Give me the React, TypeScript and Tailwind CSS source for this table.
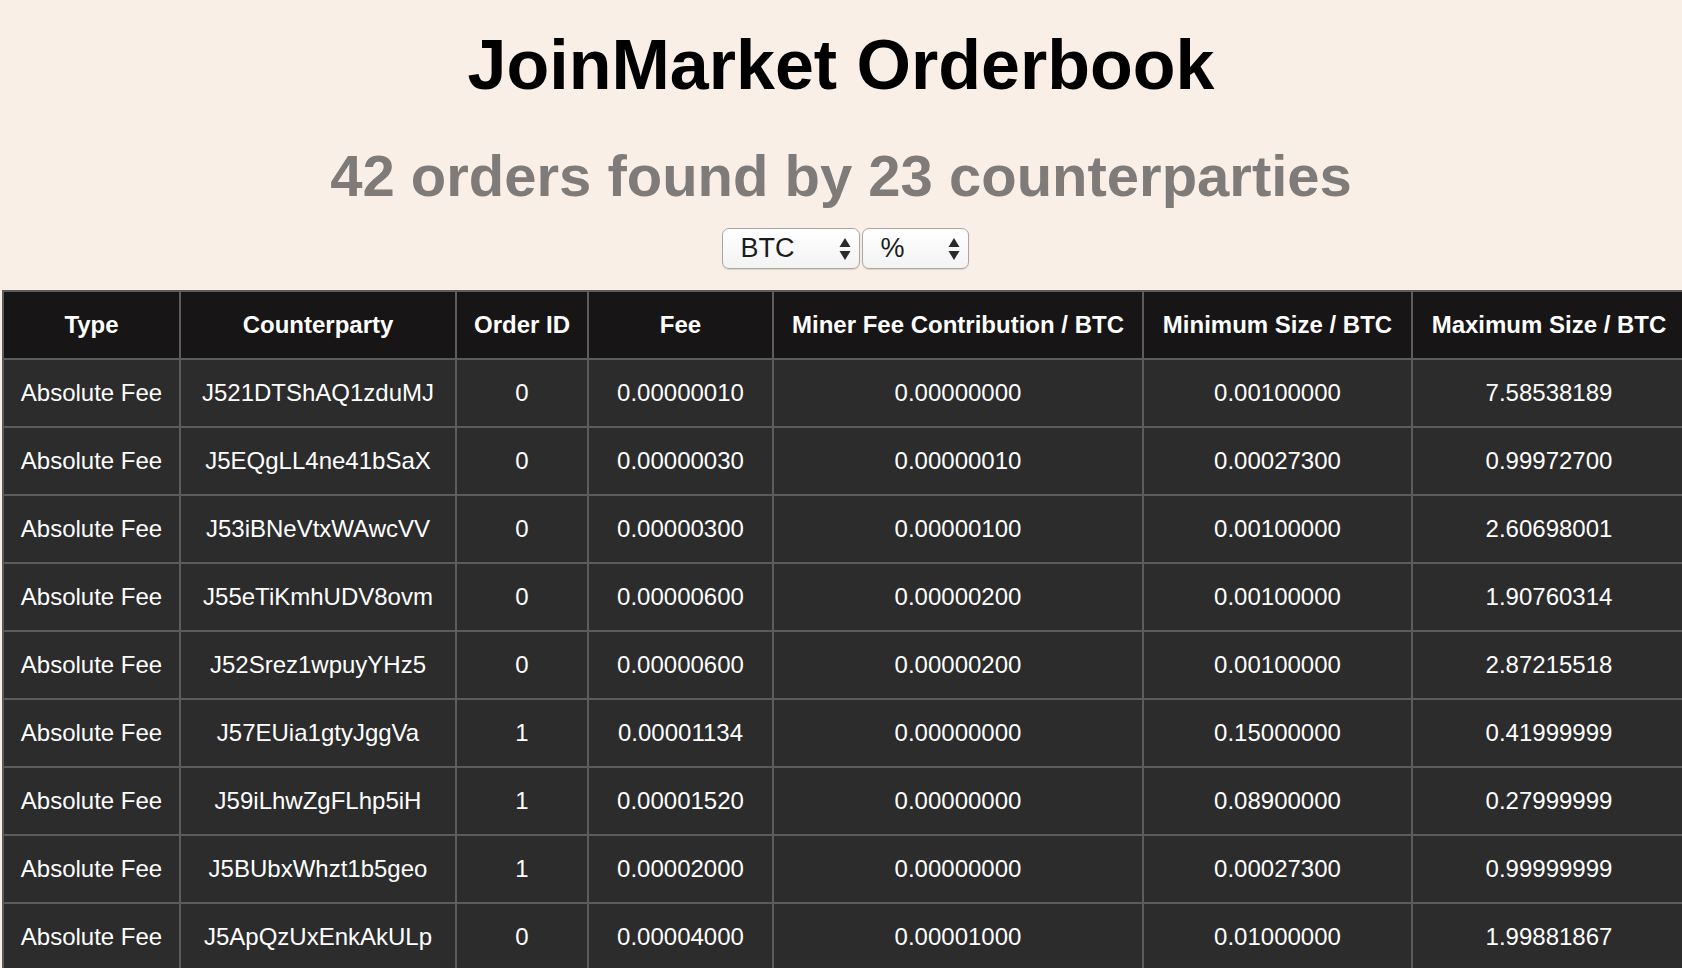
import React from "react";

interface Order {
	type: string;
	counterparty: string;
	oid: number;
	fee: string;
	minerFee: string;
	minSize: string;
	maxSize: string;
}

const orders: Order[] = [
	{ type: "Absolute Fee", counterparty: "J521DTShAQ1zduMJ", oid: 0, fee: "0.00000010", minerFee: "0.00000000", minSize: "0.00100000", maxSize: "7.58538189" },
	{ type: "Absolute Fee", counterparty: "J5EQgLL4ne41bSaX", oid: 0, fee: "0.00000030", minerFee: "0.00000010", minSize: "0.00027300", maxSize: "0.99972700" },
	{ type: "Absolute Fee", counterparty: "J53iBNeVtxWAwcVV", oid: 0, fee: "0.00000300", minerFee: "0.00000100", minSize: "0.00100000", maxSize: "2.60698001" },
	{ type: "Absolute Fee", counterparty: "J55eTiKmhUDV8ovm", oid: 0, fee: "0.00000600", minerFee: "0.00000200", minSize: "0.00100000", maxSize: "1.90760314" },
	{ type: "Absolute Fee", counterparty: "J52Srez1wpuyYHz5", oid: 0, fee: "0.00000600", minerFee: "0.00000200", minSize: "0.00100000", maxSize: "2.87215518" },
	{ type: "Absolute Fee", counterparty: "J57EUia1gtyJggVa", oid: 1, fee: "0.00001134", minerFee: "0.00000000", minSize: "0.15000000", maxSize: "0.41999999" },
	{ type: "Absolute Fee", counterparty: "J59iLhwZgFLhp5iH", oid: 1, fee: "0.00001520", minerFee: "0.00000000", minSize: "0.08900000", maxSize: "0.27999999" },
	{ type: "Absolute Fee", counterparty: "J5BUbxWhzt1b5geo", oid: 1, fee: "0.00002000", minerFee: "0.00000000", minSize: "0.00027300", maxSize: "0.99999999" },
	{ type: "Absolute Fee", counterparty: "J5ApQzUxEnkAkULp", oid: 0, fee: "0.00004000", minerFee: "0.00001000", minSize: "0.01000000", maxSize: "1.99881867" },
];

const columns = [
	{ label: "Type", width: "w-[177px]" },
	{ label: "Counterparty", width: "w-[276px]" },
	{ label: "Order ID", width: "w-[132px]" },
	{ label: "Fee", width: "w-[185px]" },
	{ label: "Miner Fee Contribution / BTC", width: "w-[370px]" },
	{ label: "Minimum Size / BTC", width: "w-[269px]" },
	{ label: "Maximum Size / BTC", width: "w-[274px]" },
];

const cell = "h-[68px] p-0 border-2 border-[#5c5c5c] text-[24px] text-center align-middle";

const SelectArrows = () => (
	<svg width="12" height="24" viewBox="0 0 12 24" className="shrink-0">
		<path d="M6 1 L11.5 10 L0.5 10 Z" fill="#2a2a2a" />
		<path d="M6 23 L11.5 14 L0.5 14 Z" fill="#2a2a2a" />
	</svg>
);

const FakeSelect = ({ value, width }: { value: string; width: string }) => (
	<div
		className={`${width} h-[41px] flex items-center justify-between pl-[18px] pr-[8px] rounded-[7px] border border-[#a9a7a4] bg-gradient-to-b from-[#ffffff] to-[#f3f3f3] shadow-[0_1px_1px_rgba(0,0,0,0.12)]`}
	>
		<span className="text-[27px] leading-none text-[#1c1c1c]">{value}</span>
		<SelectArrows />
	</div>
);

export default function App() {
	return (
		<div className="min-h-screen w-full overflow-hidden bg-[#f9efe6] font-['Liberation_Sans',Arial,sans-serif]">
			<div className="flex flex-col items-center pt-[30px]">
				<h1 className="text-[70px] leading-none font-bold text-black">
					JoinMarket Orderbook
				</h1>
				<h2 className="mt-[47px] text-[58px] leading-none font-bold text-[#7e7b78]">
					42 orders found by 23 counterparties
				</h2>
				<div className="mt-[23px] flex gap-[2px] ml-[8px]">
					<FakeSelect value="BTC" width="w-[138px]" />
					<FakeSelect value="%" width="w-[107px]" />
				</div>
			</div>

			<div className="mt-[21px] pl-[2px]">
				<table className="table-fixed w-[1685px] border-collapse border-2 border-[#625f5c] text-white">
					<thead>
						<tr className="bg-[#171515]">
							{columns.map((col) => (
								<th
									key={col.label}
									className={`${col.width} h-[68px] p-0 border-2 border-[#5c5c5c] text-[24px] font-bold text-center align-middle`}
								>
									{col.label}
								</th>
							))}
						</tr>
					</thead>
					<tbody>
						{orders.map((o) => (
							<tr key={o.counterparty} className="bg-[#2c2c2c]">
								<td className={cell}>{o.type}</td>
								<td className={cell}>{o.counterparty}</td>
								<td className={cell}>{o.oid}</td>
								<td className={cell}>{o.fee}</td>
								<td className={cell}>{o.minerFee}</td>
								<td className={cell}>{o.minSize}</td>
								<td className={cell}>{o.maxSize}</td>
							</tr>
						))}
					</tbody>
				</table>
			</div>
		</div>
	);
}
